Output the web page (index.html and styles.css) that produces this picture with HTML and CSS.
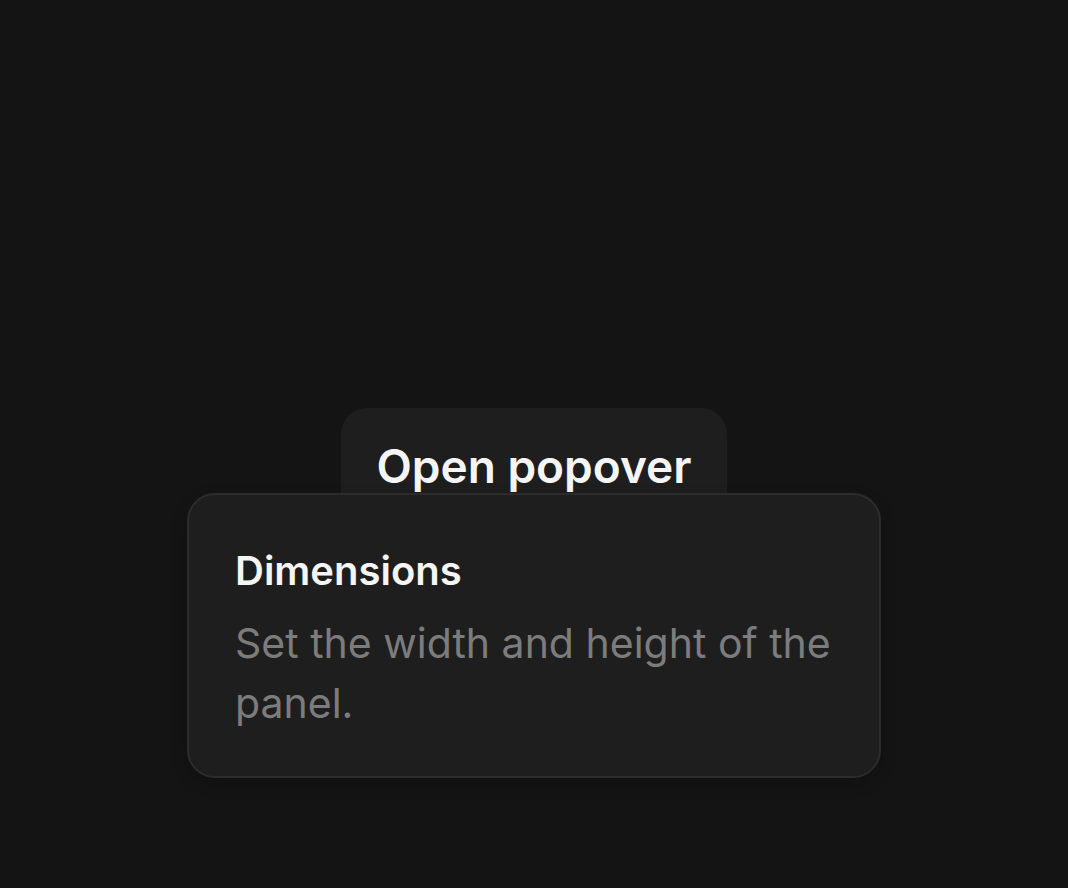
FILE: index.html
```html
<!DOCTYPE html>
<html>
<head>
<meta charset="utf-8">
<link rel="stylesheet" href="styles.css">
</head>
<body>
<main class="stage">
  <div class="anchor">
    <button class="trigger" type="button">Open popover</button>
    <div class="popover" role="dialog">
      <h2 class="popover-title">Dimensions</h2>
      <p class="popover-desc">Set the width and height of the panel.</p>
    </div>
  </div>
</main>
</body>
</html>
```

FILE: styles.css
```css
html, body {
  margin: 0;
  padding: 0;
  background: #141414;
  height: 100%;
}
body {
  font-family: Inter, "Liberation Sans", sans-serif;
}
.stage {
  display: flex;
  justify-content: center;
  padding-top: 408px;
}
.anchor {
  position: relative;
  display: flex;
  justify-content: center;
}
.trigger {
  font-family: Inter, "Liberation Sans", sans-serif;
  font-size: 46px;
  font-weight: 600;
  line-height: 69px;
  color: #f5f5f5;
  background: #1e1e1e;
  border: none;
  border-radius: 26px;
  padding: 24px 0;
  width: 386px;
  cursor: pointer;
}
.popover {
  position: absolute;
  top: 85px;
  left: 50%;
  transform: translateX(-50%);
  width: 694px;
  box-sizing: border-box;
  padding: 46px 46px 43px;
  background: #1e1e1e;
  border: 2px solid #2c2c2c;
  border-radius: 28px;
  box-shadow: 0 6px 16px rgba(0,0,0,0.18);
}
.popover-title {
  margin: 0;
  font-size: 40px;
  font-weight: 600;
  line-height: 60px;
  color: #f5f5f5;
}
.popover-desc {
  margin: 12px 0 0;
  font-size: 41px;
  font-weight: 400;
  line-height: 60px;
  color: #7c7c7c;
}
```
